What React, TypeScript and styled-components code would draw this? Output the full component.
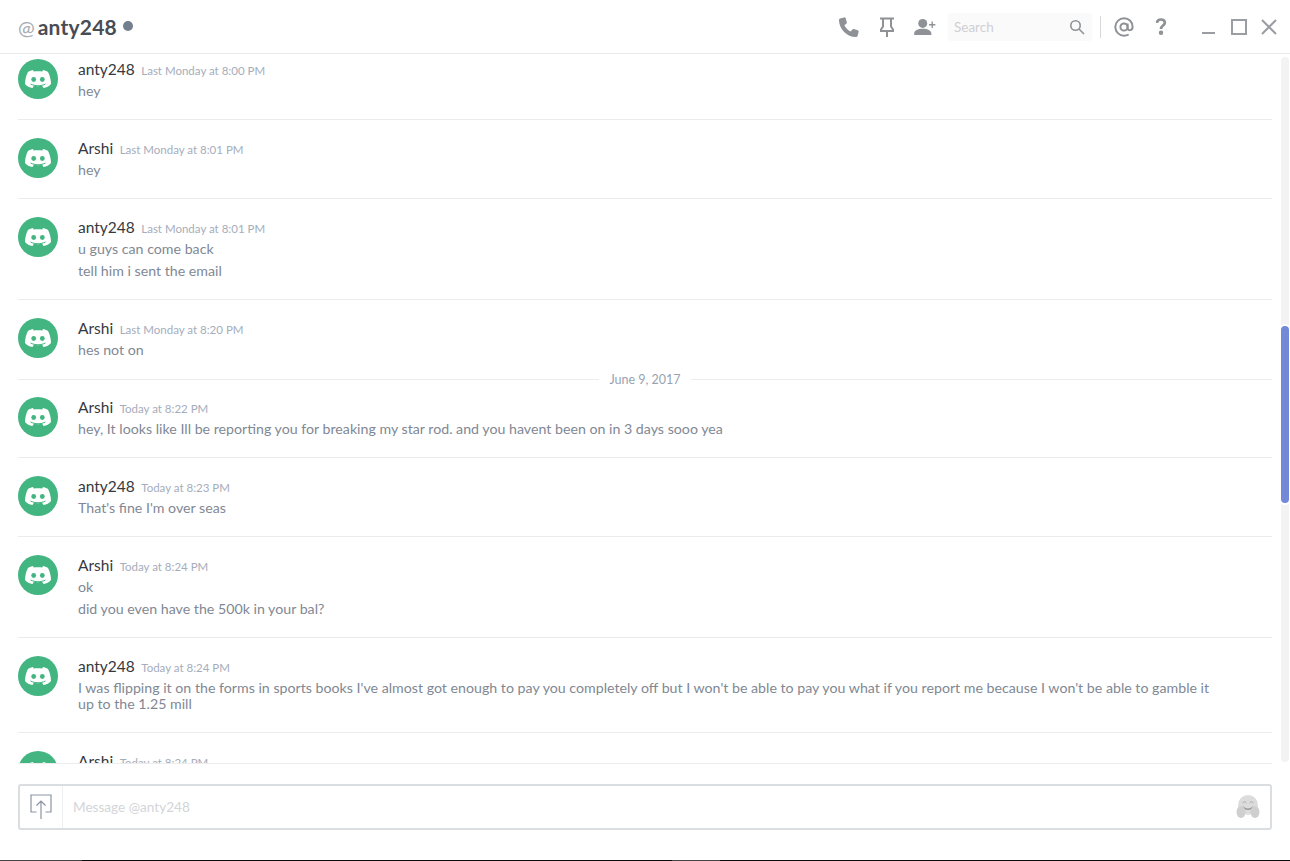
import * as React from "react";
import styled, { createGlobalStyle } from "styled-components";

const GlobalStyle = createGlobalStyle`
  html, body {
    margin: 0;
    height: 100%;
    background: #fff;
    overflow: hidden;
  }
`;

const Page = styled.div`
  width: 1290px;
  height: 861px;
  display: flex;
  flex-direction: column;
  font-family: Lato, "Open Sans", "Liberation Sans", sans-serif;
  overflow: hidden;
`;

const Header = styled.header`
  height: 54px;
  flex: none;
  box-sizing: border-box;
  border-bottom: 1px solid #ececec;
  display: flex;
  align-items: center;
  padding: 0 6px 0 18px;
`;

const At = styled.span`
  color: #a6abb3;
  font-size: 20px;
  margin-right: 3px;
`;

const Title = styled.h1`
  margin: 0;
  color: #484c55;
  font-size: 21px;
  font-weight: 700;
  letter-spacing: 0.2px;
`;

const Status = styled.span`
  width: 10px;
  height: 10px;
  border-radius: 50%;
  background: #747f8d;
  margin: -1px 0 0 6px;
`;

const Tools = styled.div`
  margin-left: auto;
  display: flex;
  align-items: center;
`;

const ToolSlot = styled.span<{ $width: number }>`
  width: ${(p) => p.$width}px;
  height: 28px;
  display: flex;
  align-items: center;
  justify-content: center;
`;

const Search = styled.div`
  width: 144px;
  height: 28px;
  margin: 0 8px 0 4px;
  padding: 0 7px 0 6px;
  box-sizing: border-box;
  border-radius: 3px;
  background: #fafafa;
  display: flex;
  align-items: center;
  justify-content: space-between;
  color: #cfcfd4;
  font-size: 13.5px;
`;

const ToolDivider = styled.span`
  width: 1px;
  height: 22px;
  background: #d8d8d8;
`;

const WindowControls = styled.div`
  display: flex;
  margin-left: 19px;
`;

const Body = styled.div`
  flex: 1;
  min-height: 0;
  display: flex;
`;

const Scroller = styled.main`
  flex: 1;
  min-width: 0;
  overflow: hidden;
  padding: 5px 0 0 18px;
`;

const Group = styled.section<{ $first?: boolean; $dated?: boolean }>`
  width: 1254px;
  box-sizing: border-box;
  display: flex;
  gap: 20px;
  padding: ${(p) => (p.$first || p.$dated ? "0" : "18px")} 0 17px;
  border-bottom: 1px solid #ececec;

  &:last-child {
    border-bottom: 0;
  }
`;

const DateGroup = styled(Group)`
  border-bottom: 0;
  padding-bottom: 0;
`;

const Avatar = styled.div`
  width: 40px;
  height: 40px;
  flex: none;
  border-radius: 50%;
  background: #43b581;
  display: flex;
  align-items: center;
  justify-content: center;
`;

const Content = styled.div`
  min-width: 0;
  flex: 1;
  padding-right: 55px;
`;

const Meta = styled.div`
  display: flex;
  align-items: baseline;
  gap: 6.500px;
  height: 21px;
  line-height: 20px;
`;

const Name = styled.span`
  color: #36393f;
  font-size: 15.5px;
`;

const Time = styled.span`
  color: #a5adbb;
  font-size: 11.5px;
`;

const Line = styled.div`
  color: #7f8894;
  font-size: 14.2px;
  line-height: 16px;
  padding: 3px 0;
`;

const DateDivider = styled.div`
  width: 1254px;
  height: 36px;
  display: flex;
  align-items: center;
  gap: 10px;
  color: #99a3b0;
  font-size: 12.5px;

  &::before,
  &::after {
    content: "";
    flex: 1;
    height: 1px;
    background: #ececec;
  }
`;

const Track = styled.div`
  width: 8px;
  flex: none;
  margin: 3px 1px 1px 0;
  border-radius: 4px;
  background: #f3f3f3;
  padding-top: 269px;
  box-sizing: border-box;
`;

const Thumb = styled.div`
  height: 177px;
  border-radius: 4px;
  background: #7289da;
  box-shadow: 0 0 0 2px #fff;
`;

const Footer = styled.footer`
  height: 97px;
  flex: none;
  box-sizing: border-box;
  border-top: 1px solid #ececec;
  margin: 0 18px;
  padding-top: 20px;
`;

const Composer = styled.div`
  height: 46px;
  box-sizing: border-box;
  border: 2px solid #dbdee1;
  border-radius: 3px;
  display: flex;
  align-items: center;
  padding-right: 10px;
`;

const Upload = styled.div`
  width: 43px;
  height: 42px;
  flex: none;
  box-sizing: border-box;
  border-right: 1px solid #eeeff1;
  display: flex;
  align-items: center;
  justify-content: center;
`;

const Placeholder = styled.div`
  flex: 1;
  padding-left: 10px;
  color: #d3d5d8;
  font-size: 13.6px;
`;

const BottomEdge = styled.div`
  height: 1px;
  flex: none;
  background: linear-gradient(
    to right,
    #444 0 82px,
    #0a0a0a 82px 672px,
    #444 672px 720px,
    #0a0a0a 720px
  );
`;

const Clyde = () => (
  <svg width="26" height="20" viewBox="0 0 26 20">
    <path
      fill="#fff"
      d="M8 1C5.500 1.500 3.800 2.300 3 3 1.500 5.800 0 10 0 15c1.800 2.200 4.500 3.500 7.500 4l1.500-2.500c3 1 5 1 8 0l1.500 2.500c3-.5 5.700-1.800 7.500-4 0-5-1.500-9.200-3-12-.8-.7-2.500-1.500-5-2l-.7 1.500c-3-.5-5.600-.5-8.600 0L8 1Z"
    />
    <circle cx="8.700" cy="10.500" r="2.400" fill="#43b581" />
    <circle cx="17.300" cy="10.500" r="2.400" fill="#43b581" />
    <path d="M5.500 15c4.500 2.300 10.500 2.300 15 0" fill="none" stroke="#43b581" strokeWidth="1" />
  </svg>
);

const PhoneIcon = () => (
  <svg width="22" height="22" viewBox="0 0 24 24">
    <path
      fill="#8e9297"
      d="M6.600 1.500 2.300 2.700C1.500 3 1 3.700 1 4.500 1.500 14.500 9.500 22.500 19.500 23c.8 0 1.500-.5 1.800-1.300l1.200-4.300c.2-.8-.2-1.500-1-1.800l-4.300-1.300c-.7-.2-1.300 0-1.800.6l-1.500 2c-3-1.500-5.400-3.900-6.900-6.900l2-1.500c.6-.5.800-1.100.6-1.800L8.400 2.500c-.3-.8-1-1.200-1.800-1Z"
    />
  </svg>
);

const PinIcon = () => (
  <svg width="14" height="20" viewBox="0 0 14 20">
    <path
      fill="none"
      stroke="#8e9297"
      strokeWidth="2"
      d="M0 1.500h14M3 1.500v8L1 12.500V14h12v-1.500l-2-3v-8M7 14v6"
    />
  </svg>
);

const AddFriendIcon = () => (
  <svg width="22" height="18" viewBox="0 0 24 20">
    <circle cx="9.500" cy="6" r="5" fill="#8e9297" />
    <path fill="#8e9297" d="M0 19v-2c0-3 4-5 9.500-5s9.500 2 9.500 5v2H0Z" />
    <path stroke="#8e9297" strokeWidth="1.500" d="M20 4v7M16.500 7.500h7" />
  </svg>
);

const SearchIcon = () => (
  <svg width="16" height="16" viewBox="0 0 16 16" fill="none" stroke="#8e9297" strokeWidth="1.600">
    <circle cx="6.500" cy="6.500" r="4.700" />
    <path d="M10 10l5 5" />
  </svg>
);

const MentionIcon = () => (
  <svg width="20" height="20" viewBox="0 0 20 20" fill="none" stroke="#8e9297" strokeWidth="2">
    <circle cx="10" cy="10" r="3.600" />
    <path d="M13.600 6.500V11c0 3 4.900 3 5-1 .1-5-3.600-8.700-8.600-8.700A8.700 8.700 0 0 0 10 18.700c2 0 3.300-.4 4.700-1.200" />
  </svg>
);

const HelpIcon = () => (
  <svg width="12" height="17" viewBox="0 0 12 19" fill="none" stroke="#8e9297" strokeWidth="3">
    <path d="M1.500 5.500C1.700 3 3.500 1.700 6 1.700c2.600 0 4.300 1.400 4.300 3.500 0 3.200-4.300 3.400-4.300 7" />
    <circle cx="6" cy="16.500" r="1" fill="#8e9297" />
  </svg>
);

const WindowIcon = ({ d }: { d: string }) => (
  <svg width="16" height="16" viewBox="0 0 16 16" fill="none" stroke="#9a9da2" strokeWidth="2">
    <path d={d} />
  </svg>
);

const UploadIcon = () => (
  <svg width="22" height="26" viewBox="0 0 22 26" fill="none" stroke="#8b93a3" strokeWidth="1.200">
    <path d="M6.500 18H1V1h20v17h-5.500" />
    <path d="M11 25V7M6.500 11.500 11 7l4.500 4.500" />
  </svg>
);

const HugIcon = () => (
  <svg width="24" height="24" viewBox="0 0 24 24">
    <circle cx="12" cy="10" r="10" fill="#dcdcdc" />
    <path d="M6.500 8c1-1.400 3-1.400 4 0M13.500 8c1-1.400 3-1.400 4 0" fill="none" stroke="#aaa" strokeWidth="1" />
    <path d="M7 12c2.500 3 7.500 3 10 0" fill="none" stroke="#999" strokeWidth="1.400" />
    <ellipse cx="5" cy="17" rx="4.500" ry="6" fill="#cfcfcf" />
    <ellipse cx="19" cy="17" rx="4.500" ry="6" fill="#cfcfcf" />
  </svg>
);

type Message = { name: string; time: string; lines: string[]; date?: string };

const messages: Message[] = [
  { name: "anty248", time: "Last Monday at 8:00 PM", lines: ["hey"] },
  { name: "Arshi", time: "Last Monday at 8:01 PM", lines: ["hey"] },
  { name: "anty248", time: "Last Monday at 8:01 PM", lines: ["u guys can come back", "tell him i sent the email"] },
  { name: "Arshi", time: "Last Monday at 8:20 PM", lines: ["hes not on"] },
  {
    name: "Arshi",
    time: "Today at 8:22 PM",
    date: "June 9, 2017",
    lines: ["hey, It looks like Ill be reporting you for breaking my star rod. and you havent been on in 3 days sooo yea"],
  },
  { name: "anty248", time: "Today at 8:23 PM", lines: ["That's fine I'm over seas"] },
  { name: "Arshi", time: "Today at 8:24 PM", lines: ["ok", "did you even have the 500k in your bal?"] },
  {
    name: "anty248",
    time: "Today at 8:24 PM",
    lines: [
      "I was flipping it on the forms in sports books I've almost got enough to pay you completely off but I won't be able to pay you what if you report me because I won't be able to gamble it up to the 1.25 mill",
    ],
  },
  { name: "Arshi", time: "Today at 8:24 PM", lines: [] },
];

const MessageRow = ({ message, index }: { message: Message; index: number }) => {
  const next = messages[index + 1];
  const Row = next?.date ? DateGroup : Group;
  return (
    <Row $first={index === 0} $dated={!!message.date}>
      <Avatar>
        <Clyde />
      </Avatar>
      <Content>
        <Meta>
          <Name>{message.name}</Name>
          <Time>{message.time}</Time>
        </Meta>
        {message.lines.map((line) => (
          <Line key={line}>{line}</Line>
        ))}
      </Content>
    </Row>
  );
};

export default function App() {
  return (
    <Page>
      <GlobalStyle />
      <Header>
        <At>@</At>
        <Title>anty248</Title>
        <Status />
        <Tools>
          <ToolSlot $width={38}><PhoneIcon /></ToolSlot>
          <ToolSlot $width={38}><PinIcon /></ToolSlot>
          <ToolSlot $width={38}><AddFriendIcon /></ToolSlot>
          <Search>
            Search
            <SearchIcon />
          </Search>
          <ToolDivider />
          <ToolSlot $width={46}><MentionIcon /></ToolSlot>
          <ToolSlot $width={28}><HelpIcon /></ToolSlot>
          <WindowControls>
            <ToolSlot $width={30}><WindowIcon d="M1 14h13" /></ToolSlot>
            <ToolSlot $width={30}><WindowIcon d="M1 1h14v14H1z" /></ToolSlot>
            <ToolSlot $width={30}><WindowIcon d="M1 1l14 14M15 1 1 15" /></ToolSlot>
          </WindowControls>
        </Tools>
      </Header>
      <Body>
        <Scroller>
          {messages.map((message, index) => (
            <React.Fragment key={index}>
              {message.date && <DateDivider>{message.date}</DateDivider>}
              <MessageRow message={message} index={index} />
            </React.Fragment>
          ))}
        </Scroller>
        <Track>
          <Thumb />
        </Track>
      </Body>
      <Footer>
        <Composer>
          <Upload>
            <UploadIcon />
          </Upload>
          <Placeholder>Message @anty248</Placeholder>
          <HugIcon />
        </Composer>
      </Footer>
      <BottomEdge />
    </Page>
  );
}
